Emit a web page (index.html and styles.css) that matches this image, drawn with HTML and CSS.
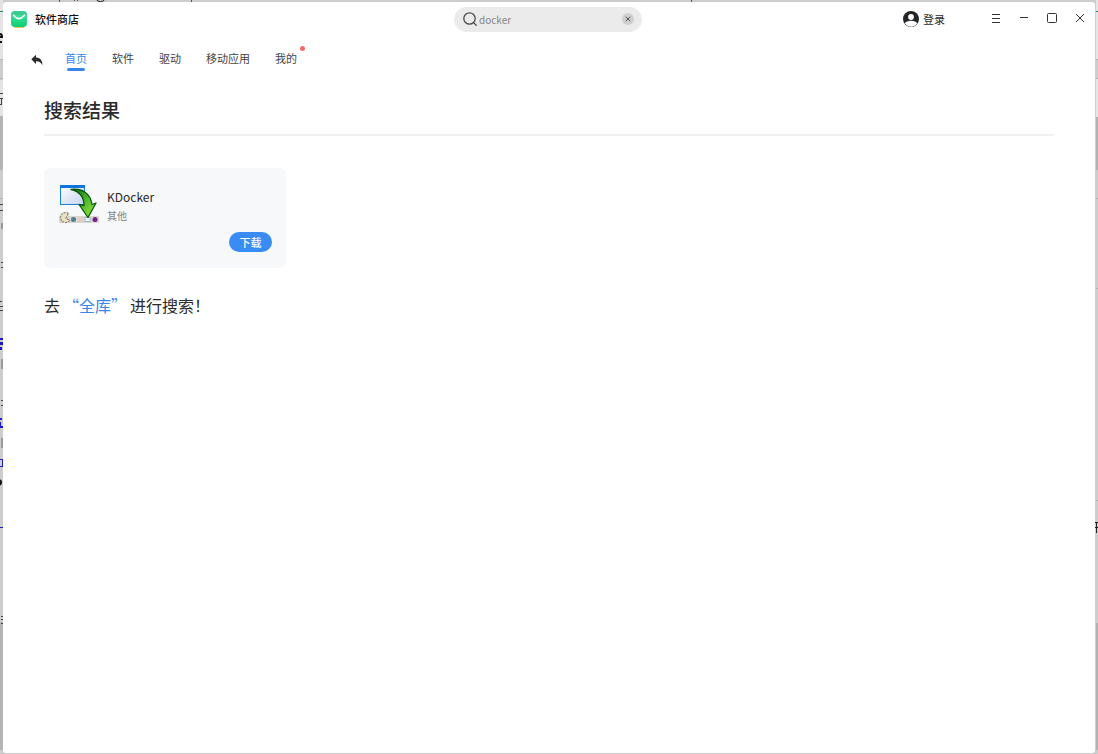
FILE: index.html
```
<!DOCTYPE html>
<html lang="zh-CN">
<head>
  <meta charset="UTF-8" />
  <meta name="viewport" content="width=device-width, initial-scale=1" />
  <title>软件商店</title>
  <link rel="stylesheet" href="styles.css">
</head>
<body>
<!-- edge of the page behind the window -->
<svg width="3" height="754" viewBox="0 0 3 754" aria-hidden="true">
  <path fill="#e3e3e3" d="M0 0h3v60H0zM0 80h3v37H0z"/>
  <path fill="#b4b4b4" d="M0 59h3v1H0zM0 78h3v1H0zM0 116h3v54H0zM0 198h3v1H0zM0 622h3v128H0z"/>
  <path fill="#2b8a5c" d="M0 11h3v1H0z"/>
  <path fill="none" stroke="#111" stroke-width="2" d="M0 34q2 0 2 3H0M0 42h2M0 480q2 2 0 5"/>
  <path fill="none" stroke="#444" d="M0 93.5h3M0 98.5h3M1.500 98v6M0 104.500h2M0 204.500h3M0 210.500h3M1 262.500h2M1 267.500h2M0 301.500h2M0 306.500h3M0 310.500h3M1 400.500h2M1 405.500h2M1 616.500h2M1 619.500h2M1 623.500h2"/>
  <path fill="#999" d="M1 223h2v6H1zM1 359h2v10H1zM1 438h2v10H1z"/>
  <path fill="#1a1acc" d="M0 338h3v2H0zM0 342h3v3H0zM0 347h2v3H0zM0 418h2v2H0zM0 422h1v4H0zM0 426h3v2H0zM0 459h3v1H0zM2 459h1v8H2zM0 466h3v1H0zM0 527h3v1H0z"/>
</svg>

<div class="middle">
<svg class="top-edge" height="2" aria-hidden="true">
  <path fill="#555" d="M56 0h1v2h-1zM71 0h1v1h-1zM74 0h1v1h-1zM188 0h1v2h-1zM688 0h1v2h-1z"/>
  <path fill="none" stroke="#222" stroke-width="1" d="M94 0q0 1.500 3.500 1.500T101 0"/>
</svg>

<div class="window">
  <header class="titlebar">
    <div class="brand">
      <svg width="18" height="18" viewBox="0 0 18 18" aria-hidden="true">
        <defs>
          <linearGradient id="logoFill" x1="0" y1="0" x2="0" y2="1">
            <stop offset="0" stop-color="#46e6a5"/>
            <stop offset="1" stop-color="#0bcf73"/>
          </linearGradient>
        </defs>
        <path d="M4 17.200h10" stroke="#e9b84b" stroke-width="1.200"/>
        <rect x="1" y="1" width="16" height="16" rx="4" fill="url(#logoFill)"/>
        <path d="M1 5q0-4 4-4h8q4 0 4 4z" fill="#35bd87" opacity=".6"/>
        <path d="M3.600 5.200Q9 12 14.400 5.200" fill="none" stroke="#fff" stroke-width="1.600" stroke-linecap="round"/>
      </svg>
      <span>软件商店</span>
    </div>

    <form class="search">
      <svg width="14" height="14" viewBox="0 0 14 14" fill="none" stroke="#4c4c4c" stroke-width="1.300" stroke-linecap="round" aria-hidden="true">
        <circle cx="6.500" cy="6.500" r="5.700"/>
        <path d="M10.600 10.600l2.600 2.600"/>
      </svg>
      <input type="text" value="docker" aria-label="搜索" />
      <button type="reset" class="clear" aria-label="清除">
        <svg width="6" height="6" viewBox="0 0 6 6" stroke="#555" stroke-width="1" aria-hidden="true"><path d="M.7.7l4.600 4.600M5.300.7L.7 5.300"/></svg>
      </button>
    </form>

    <div class="actions">
      <button type="button" class="login">
        <svg width="16" height="16" viewBox="0 0 16 16" aria-hidden="true">
          <circle cx="8" cy="8" r="8" fill="#222428"/>
          <circle cx="8" cy="6" r="2.900" fill="#fff"/>
          <path fill="#fff" d="M1.800 12.200Q3.200 9.700 8 9.700T14.200 12.200A7.300 7.300 0 0 1 1.800 12.200z"/>
        </svg>
        <span>登录</span>
      </button>
      <div class="controls">
        <button type="button" aria-label="菜单">
          <svg width="12" height="12" viewBox="0 0 12 12" aria-hidden="true"><path d="M2 2.500h8M2 6.500h8M2 10.500h8"/></svg>
        </button>
        <button type="button" aria-label="最小化">
          <svg width="12" height="12" viewBox="0 0 12 12" aria-hidden="true"><path d="M2 5.500h8"/></svg>
        </button>
        <button type="button" aria-label="最大化">
          <svg width="12" height="12" viewBox="0 0 12 12" aria-hidden="true"><rect x="1.500" y="1.500" width="9" height="9" rx="1"/></svg>
        </button>
        <button type="button" aria-label="关闭">
          <svg width="12" height="12" viewBox="0 0 12 12" aria-hidden="true"><path d="M2 2l8 8M10 2l-8 8"/></svg>
        </button>
      </div>
    </div>
  </header>

  <nav class="tabs">
    <button type="button" class="back" aria-label="返回">
      <svg width="12" height="12" viewBox="0 0 12 12" aria-hidden="true"><path fill="#2b2b2b" d="M5 .8v2.700c4.200.2 6.600 2.700 6.400 7.800C10.200 8.600 8.300 7.300 5 7.300V10L.3 5.300z"/></svg>
    </button>
    <a href="#" class="tab active">首页</a>
    <a href="#" class="tab">软件</a>
    <a href="#" class="tab">驱动</a>
    <a href="#" class="tab">移动应用</a>
    <a href="#" class="tab has-dot">我的</a>
  </nav>

  <main class="content">
    <h1>搜索结果</h1>

    <div class="results">
      <article class="card">
        <div class="app">
          <svg width="40" height="40" viewBox="0 0 40 40" aria-hidden="true">
            <defs>
              <linearGradient id="paneFill" x1="0" y1="0" x2="1" y2="1">
                <stop offset="0" stop-color="#fff"/>
                <stop offset="1" stop-color="#c3d2ec"/>
              </linearGradient>
              <linearGradient id="arrowFill" x1="0" y1="0" x2="1" y2="1">
                <stop offset="0" stop-color="#0c6b10"/>
                <stop offset=".5" stop-color="#4fb82a"/>
                <stop offset="1" stop-color="#a6ec3e"/>
              </linearGradient>
            </defs>
            <rect x="1.500" y="1.500" width="24" height="19" fill="url(#paneFill)" stroke="#1b7fe0"/>
            <path fill="#0d74de" d="M1 1h25v3H1z"/>
            <rect x="0" y="32" width="40" height="7" fill="#ddd6d0"/>
            <path fill="#ebe2bd" stroke="#85827a" stroke-width="1.200" stroke-dasharray="2 1" d="M9.500 29.500A5 5 0 1 0 10.500 36.500L7 34z"/>
            <circle cx="14.500" cy="35.500" r="2.500" fill="#4c8197"/>
            <path fill="#e3cfc0" d="M19 33h5v5h-5z"/>
            <path fill="#edf6ff" stroke="#97bbd2" d="M26 33.500h5v4h-5z"/>
            <circle cx="36" cy="35.500" r="2.500" fill="#722184"/>
            <path fill="url(#arrowFill)" stroke="#08590d" stroke-width="1.300" stroke-linejoin="round" d="M12 5.500C23 4 31.500 9.500 33 20.500l4-1.500L29 33.500 20 20.500l5 1C25 13.500 21 7.500 12 5.500z"/>
          </svg>
          <div class="meta">
            <h2>KDocker</h2>
            <p>其他</p>
          </div>
        </div>
        <button type="button" class="download">下载</button>
      </article>
    </div>

    <p class="more"><span>去</span><a href="#">“全库”</a><span>进行搜索！</span></p>
  </main>
</div>
</div>

<svg width="3" height="754" viewBox="0 0 3 754" aria-hidden="true">
  <path fill="#e6e6e6" d="M1 0h2v59H1zM1 79h2v38H1z"/>
  <path fill="#b2b2b2" d="M1 59h2v1H1zM1 78h2v1H1zM1 117h2v53H1zM1 198h2v1H1zM1 288h2v1H1zM1 500h2v1H1zM1 623h2v127H1z"/>
  <path fill="#2b8a5c" d="M1 11h2v1H1z"/>
  <path fill="none" stroke="#222" d="M0 522.500h3M0 527.500h3M1.500 522v11"/>
</svg>
</body>
</html>
```

FILE: styles.css
```
* {
  box-sizing: border-box;
}

body {
  margin: 0;
  min-height: 100vh;
  display: flex;
  background: #cdcdcd;
  font-family: "Noto Sans CJK SC", "Noto Sans", sans-serif;
  font-size: 11px;
  color: #2b2b2b;
}

button {
  padding: 0;
  border: none;
  background: none;
  font: inherit;
  color: inherit;
  cursor: pointer;
}

a {
  color: inherit;
  text-decoration: none;
}

svg {
  display: block;
  flex-shrink: 0;
}

.middle {
  flex: 1;
  min-width: 0;
  display: flex;
  flex-direction: column;
}

.top-edge {
  width: 100%;
}

.window {
  flex: 1;
  margin-bottom: 1px;
  background: #fff;
  border-radius: 3px;
}

/* Title bar */
.titlebar {
  display: grid;
  grid-template-columns: 1fr auto 1fr;
  align-items: center;
  height: 34px;
  padding: 0 9px 0 7px;
}

.brand {
  display: flex;
  align-items: center;
  gap: 7px;
  font-weight: 500;
  color: #111;
}

.search {
  display: flex;
  align-items: center;
  gap: 2px;
  width: 188px;
  height: 25px;
  padding: 0 8px 0 9px;
  background: #ebebeb;
  border-radius: 13px;
}

.search input {
  flex: 1;
  min-width: 0;
  padding: 0;
  border: none;
  outline: none;
  background: none;
  font: inherit;
  font-size: 10px;
  color: #858585;
}

.clear {
  display: flex;
  align-items: center;
  justify-content: center;
  width: 12px;
  height: 12px;
  border-radius: 50%;
  background: #d0d0d0;
}

.actions {
  display: flex;
  align-items: center;
  justify-content: flex-end;
  gap: 45px;
}

.login {
  display: flex;
  align-items: center;
  gap: 4px;
}

.controls {
  display: flex;
  gap: 16px;
  padding-bottom: 2px;
}

.controls svg {
  fill: none;
  stroke: #333;
  stroke-width: 1;
}

/* Tabs */
.tabs {
  display: flex;
  align-items: center;
  gap: 25px;
  height: 44px;
  padding: 0 28px;
}

.back {
  padding-top: 4px;
  margin-right: -3px;
}

.tab {
  position: relative;
  color: #444;
}

.tab.active {
  color: #3787e8;
}

.tab.active::after {
  content: "";
  position: absolute;
  left: 2px;
  right: 2px;
  bottom: -5px;
  height: 3px;
  border-radius: 2px;
  background: #3787e8;
}

.tab.has-dot::after {
  content: "";
  position: absolute;
  top: -4px;
  right: -8px;
  width: 5px;
  height: 5px;
  border-radius: 50%;
  background: #f26a6a;
}

/* Search results */
.content {
  padding: 14px 41px;
}

h1 {
  margin: 0;
  padding-bottom: 8px;
  border-bottom: 2px solid #f0f0f0;
  font-size: 19px;
  line-height: 32px;
  font-weight: 500;
}

.results {
  display: grid;
  grid-template-columns: repeat(auto-fill, 242px);
  gap: 14px;
  padding: 32px 0 24px;
}

.card {
  display: flex;
  flex-direction: column;
  padding: 16px 14px 16px 15px;
  background: #f6f8fa;
  border-radius: 6px;
}

.app {
  display: flex;
  gap: 8px;
}

.meta {
  padding-top: 3px;
}

h2 {
  margin: 0;
  font-size: 12px;
  line-height: 20px;
  font-weight: 400;
}

.meta p {
  margin: 0;
  font-size: 10px;
  line-height: 18px;
  color: #858585;
}

.download {
  align-self: flex-end;
  width: 43px;
  height: 20px;
  margin-top: 7px;
  border-radius: 10px;
  background: #3a8cf5;
  color: #fff;
  font-weight: 500;
  line-height: 20px;
}

.more {
  display: flex;
  gap: 3px;
  margin: 0;
  font-size: 16px;
  line-height: 26px;
}

.more a {
  color: #3787e8;
}
```
